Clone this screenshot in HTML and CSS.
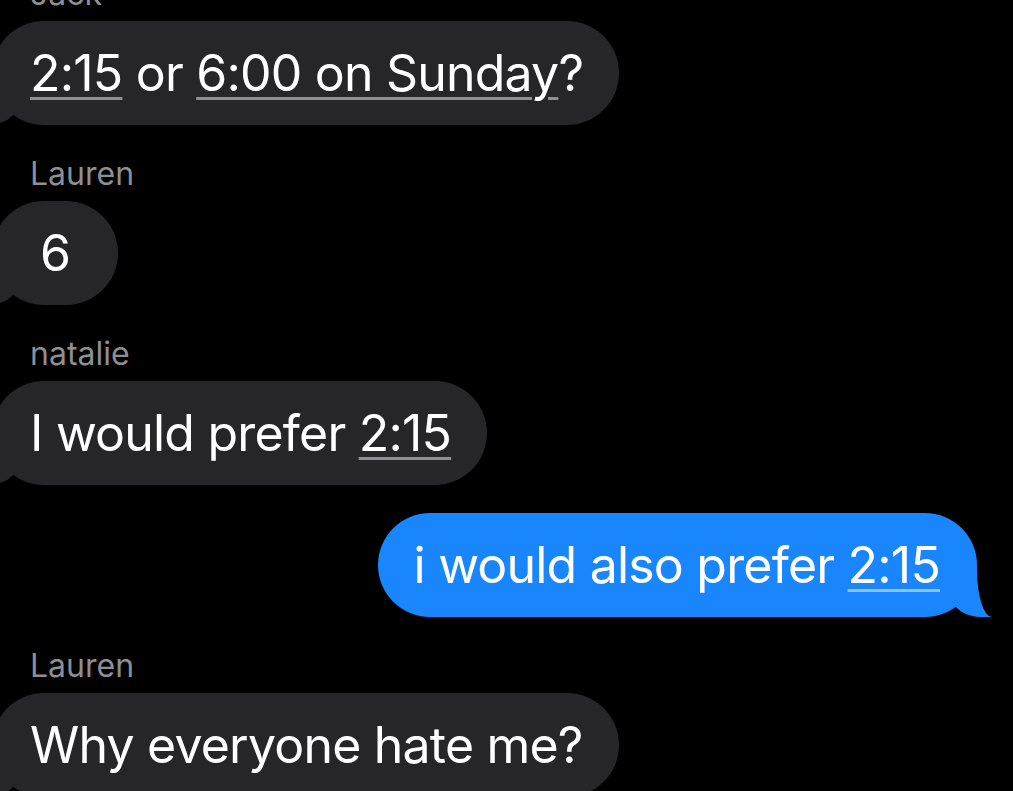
FILE: index.html
```html
<!DOCTYPE html>
<html lang="en">
<head>
<meta charset="utf-8">
<title>Messages</title>
<link rel="stylesheet" href="styles.css">
</head>
<body>
<main class="thread">
  <div class="sender">Jack</div>
  <div class="bubble received"><span class="link">2:15</span> or <span class="link">6:00 on Sunday</span>?</div>

  <div class="sender gap">Lauren</div>
  <div class="bubble received short">6</div>

  <div class="sender gap">natalie</div>
  <div class="bubble received">I would prefer <span class="link">2:15</span></div>

  <div class="bubble sent">i would also prefer <span class="link">2:15</span></div>

  <div class="sender gap">Lauren</div>
  <div class="bubble received">Why everyone hate me?</div>
</main>
</body>
</html>
```
FILE: styles.css
```css
html, body {
  margin: 0;
  padding: 0;
  background: #000;
  overflow: hidden;
}

body {
  font-family: Inter, "Noto Sans", "Liberation Sans", sans-serif;
  color: #fff;
}

.thread {
  display: flex;
  flex-direction: column;
  align-items: flex-start;
  margin-top: -25px;
}

.sender {
  font-size: 32px;
  line-height: 38px;
  color: #8e8e93;
  margin: 0 0 8px 30px;
}

.sender.gap {
  margin-top: 30px;
}

.bubble {
  position: relative;
  font-size: 50px;
  line-height: 66px;
  letter-spacing: -0.8px;
  padding: 19px 36px;
  border-radius: 52px;
  white-space: nowrap;
}

.received {
  background: #262629;
  margin-left: -8px;
  padding-left: 38px;
}

.received.short {
  min-width: 126px;
  box-sizing: border-box;
  padding-left: 0;
  padding-right: 0;
  text-align: center;
}

.sent {
  background: #1a86fe;
  align-self: flex-end;
  margin: 28px 36px 0 0;
  padding-left: 36px;
  padding-right: 37px;
}

.received::before,
.received::after,
.sent::before,
.sent::after {
  content: "";
  position: absolute;
  bottom: 0;
  height: 50px;
}

.sent::before {
  right: -15px;
  width: 40px;
  background: #1a86fe;
  border-bottom-left-radius: 30px 20px;
}

.sent::after {
  right: -30px;
  width: 30px;
  background: #000;
  border-bottom-left-radius: 15px 47px;
}

.received::before {
  left: -15px;
  width: 40px;
  background: #262629;
  border-bottom-right-radius: 30px 20px;
}

.received::after {
  left: -30px;
  width: 30px;
  background: #000;
  border-bottom-right-radius: 15px 47px;
}

.link {
  text-decoration: underline;
  text-decoration-thickness: 3px;
  text-underline-offset: 6px;
  text-decoration-skip-ink: auto;
}

.received .link {
  text-decoration-color: #8e8e93;
}

.sent .link {
  text-decoration-color: rgba(255, 255, 255, 0.5);
}
```
